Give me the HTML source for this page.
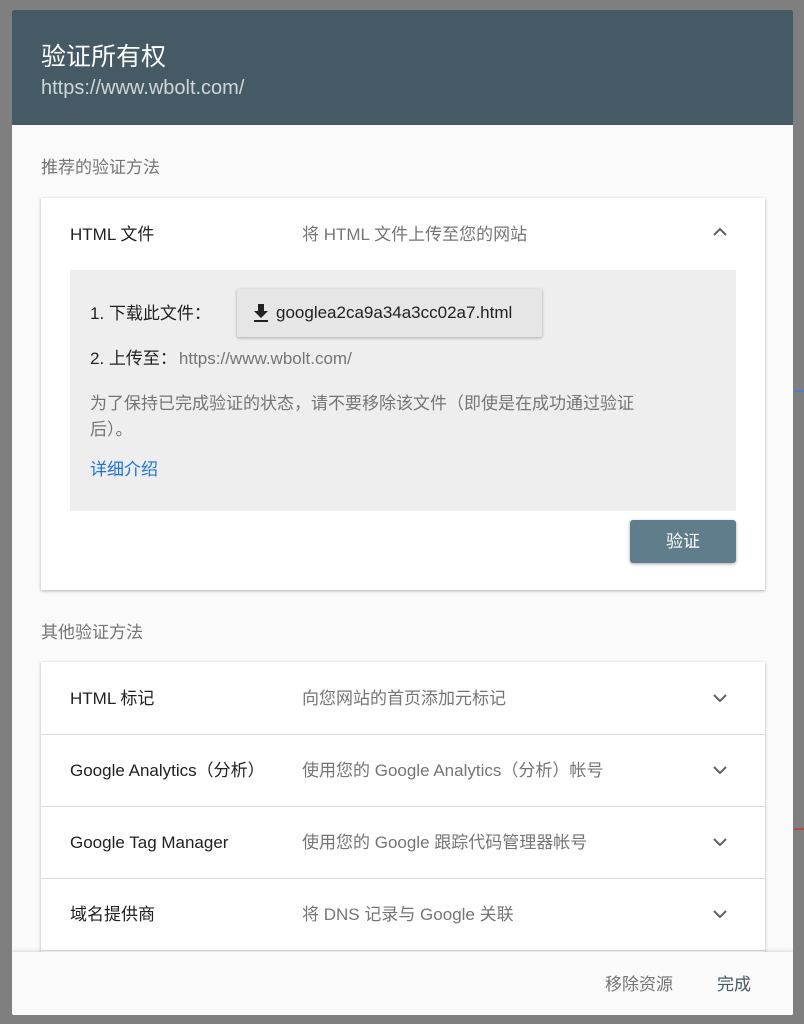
<!DOCTYPE html>
<html><head><meta charset="utf-8"><style>
body{margin:0;width:804px;height:1024px;background:#7f7f7f;position:relative;overflow:hidden;font-family:"Liberation Sans","Noto Sans CJK SC",sans-serif;}
div{line-height:22px}
.dlg{position:absolute;left:12px;top:10px;width:781px;height:1005px;background:#fafafa;overflow:hidden;border-radius:2px}
.hd{position:absolute;left:0;top:0;width:781px;height:115px;background:#465a65}
.t1{position:absolute;left:29px;top:31px;color:#fff;font-size:25px;line-height:32px}
.t2{position:absolute;left:29px;top:66px;color:#cfd6da;font-size:20px;line-height:24px}
.sec{position:absolute;left:29px;font-size:17px;color:#757575}
.card{position:absolute;left:29px;width:724px;background:#fff;box-shadow:0 1px 3px rgba(0,0,0,.3)}
.lbl{position:absolute;left:29px;font-size:17px;color:#212121;white-space:nowrap}
.desc{position:absolute;left:261px;font-size:17px;color:#757575;white-space:nowrap}
.chev{position:absolute;left:670px;width:18px;height:12px}
.row{position:absolute;left:0;width:724px;height:72px;border-bottom:1px solid #ddd}
.row .lbl,.row .desc{top:26px}
.row .chev{top:30px}
.gray{position:absolute;left:29px;top:72px;width:666px;height:241px;background:#eeeeee}
.ft{position:absolute;left:0;top:942px;width:781px;height:63px;background:#fafafa;box-shadow:0 -1px 3px rgba(0,0,0,.15)}
</style></head><body>
<div style="position:absolute;right:0;top:390px;width:10px;height:2px;background:#4a7fd0"></div>
<div style="position:absolute;right:0;top:828px;width:10px;height:2px;background:#b84a3a"></div>
<div class="dlg">
<div class="hd"><div class="t1">验证所有权</div><div class="t2">https://www.wbolt.com/</div></div>
<div class="sec" style="top:147px">推荐的验证方法</div>
<div class="card" style="top:188px;height:392px">
 <div class="lbl" style="top:26px">HTML 文件</div>
 <div class="desc" style="top:26px">将 HTML 文件上传至您的网站</div>
 <svg class="chev" style="top:28px" viewBox="0 0 18 12"><path d="M3 9L9 3L15 9" fill="none" stroke="#616161" stroke-width="2"/></svg>
 <div class="gray">
  <div style="position:absolute;left:20px;top:33px;font-size:17px;color:#212121">1. 下载此文件：</div>
  <div style="position:absolute;left:167px;top:19px;width:305px;height:48px;background:#e6e6e6;box-shadow:0 1px 3px rgba(0,0,0,.3);border-radius:2px">
   <svg style="position:absolute;left:14px;top:13px" width="20" height="22" viewBox="0 0 20 22"><path d="M7 2h6v7h4l-7 7-7-7h4z M3 18h14v2H3z" fill="#212121"/></svg>
   <div style="position:absolute;left:39px;top:13px;font-size:17px;color:#212121;white-space:nowrap">googlea2ca9a34a3cc02a7.html</div>
  </div>
  <div style="position:absolute;left:20px;top:78px;font-size:17px;color:#212121;white-space:nowrap">2. 上传至：<span style="color:#757575;margin-left:2px">https://www.wbolt.com/</span></div>
  <div style="position:absolute;left:20px;top:121px;width:578px;font-size:17px;line-height:26px;color:#757575">为了保持已完成验证的状态，请不要移除该文件（即使是在成功通过验证后）。</div>
  <div style="position:absolute;left:20px;top:189px;font-size:17px;color:#1a73e8">详细介绍</div>
 </div>
 <div style="position:absolute;left:589px;top:322px;width:106px;height:43px;background:#607d8b;border-radius:3px;box-shadow:0 1px 3px rgba(0,0,0,.35);color:#fff;font-size:17px;text-align:center;line-height:43px">验证</div>
</div>
<div class="sec" style="top:612px">其他验证方法</div>
<div class="card" style="top:652px;height:300px">
 <div class="row" style="top:0"><div class="lbl">HTML 标记</div><div class="desc">向您网站的首页添加元标记</div><svg class="chev" viewBox="0 0 18 12"><path d="M3 3L9 9L15 3" fill="none" stroke="#616161" stroke-width="2"/></svg></div>
 <div class="row" style="top:72px"><div class="lbl">Google Analytics（分析）</div><div class="desc">使用您的 Google Analytics（分析）帐号</div><svg class="chev" viewBox="0 0 18 12"><path d="M3 3L9 9L15 3" fill="none" stroke="#616161" stroke-width="2"/></svg></div>
 <div class="row" style="top:144px"><div class="lbl">Google Tag Manager</div><div class="desc">使用您的 Google 跟踪代码管理器帐号</div><svg class="chev" viewBox="0 0 18 12"><path d="M3 3L9 9L15 3" fill="none" stroke="#616161" stroke-width="2"/></svg></div>
 <div class="row" style="top:216px"><div class="lbl">域名提供商</div><div class="desc">将 DNS 记录与 Google 关联</div><svg class="chev" viewBox="0 0 18 12"><path d="M3 3L9 9L15 3" fill="none" stroke="#616161" stroke-width="2"/></svg></div>
</div>
<div class="ft">
 <div style="position:absolute;left:593px;top:22px;font-size:17px;color:#757575">移除资源</div>
 <div style="position:absolute;left:705px;top:22px;font-size:17px;color:#455a64">完成</div>
</div>
</div>
</body></html>
